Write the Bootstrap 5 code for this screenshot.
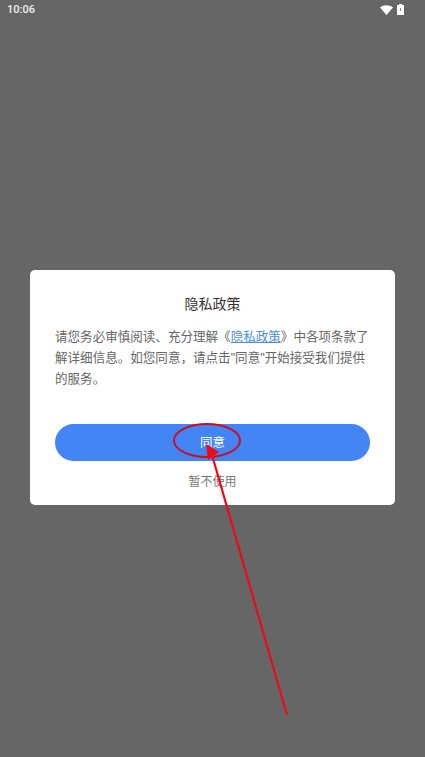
<!DOCTYPE html>
<html lang="zh">
<head>
<meta charset="utf-8">
<title>隐私政策</title>
<link href="https://cdn.jsdelivr.net/npm/bootstrap@5.3.0/dist/css/bootstrap.min.css" rel="stylesheet">
<style>
html,body{height:100%;}
body{background:#666;font-family:"Liberation Sans","Noto Sans CJK SC",sans-serif;overflow:hidden;}
.page-shell{width:425px;height:757px;}
.status-row{height:19px;padding:0 21px 0 7px;color:#f2f2f2;font:500 11px/19px Roboto,sans-serif;}
.dialog-wrap{padding:251px 30px 0;}
.dialog-box{height:235px;border-radius:5px;padding:24px 25px 0;}
.dialog-title{font-size:14px;line-height:20px;color:#333;margin:0 0 13px;font-weight:400;}
.dialog-text{font-size:12.56px;line-height:21px;color:#666;margin:0;height:62px;}
.dialog-text a{color:#4a90e2;}
.agree-btn{height:37px;margin-top:35px;background:#4485f6;border:0;border-radius:19px;color:#fff;font-size:12.5px;line-height:37px;padding:1px 0 0;}
.agree-btn:hover{background:#4485f6;color:#fff;}
.skip-link{font-size:12px;line-height:18px;color:#777;margin-top:12px;}
.mark-layer{position:absolute;left:0;top:0;pointer-events:none;}
</style>
</head>
<body class="m-0">
<div class="page-shell position-relative">
  <div class="status-row d-flex justify-content-between align-items-center">
    <span>10:06</span>
    <span class="d-flex align-items-center gap-1">
      <svg width="13" height="10" viewBox="0 0 13 10"><path d="M0 2.600C3.600-.6 9.400-.6 13 2.600L6.500 10Z" fill="#fff"/></svg>
      <svg width="7" height="11" viewBox="0 0 7 11"><path d="M2 0h3v1h2v10H0V1h2Z" fill="#fff"/><path d="M3 4h1v3H3z" fill="#888"/></svg>
    </span>
  </div>
  <div class="dialog-wrap">
    <div class="dialog-box bg-white d-flex flex-column">
      <h5 class="dialog-title text-center">隐私政策</h5>
      <p class="dialog-text">请您务必审慎阅读、充分理解《<a href="#">隐私政策</a>》中各项条款了解详细信息。如您同意，请点击"同意"开始接受我们提供的服务。</p>
      <button class="btn agree-btn w-100" type="button">同意</button>
      <div class="skip-link text-center">暂不使用</div>
    </div>
  </div>
  <svg class="mark-layer" width="425" height="757" viewBox="0 0 425 757">
    <ellipse cx="207" cy="440.500" rx="33" ry="16.500" fill="none" stroke="#c8101e" stroke-width="2"/>
    <line x1="287" y1="715" x2="212" y2="455" stroke="#ee0a14" stroke-width="2.200"/>
    <path d="M206 444L219 452 208 460Z" fill="#ee0a14"/>
  </svg>
</div>
<script src="https://cdn.jsdelivr.net/npm/bootstrap@5.3.0/dist/js/bootstrap.bundle.min.js"></script>
</body>
</html>
